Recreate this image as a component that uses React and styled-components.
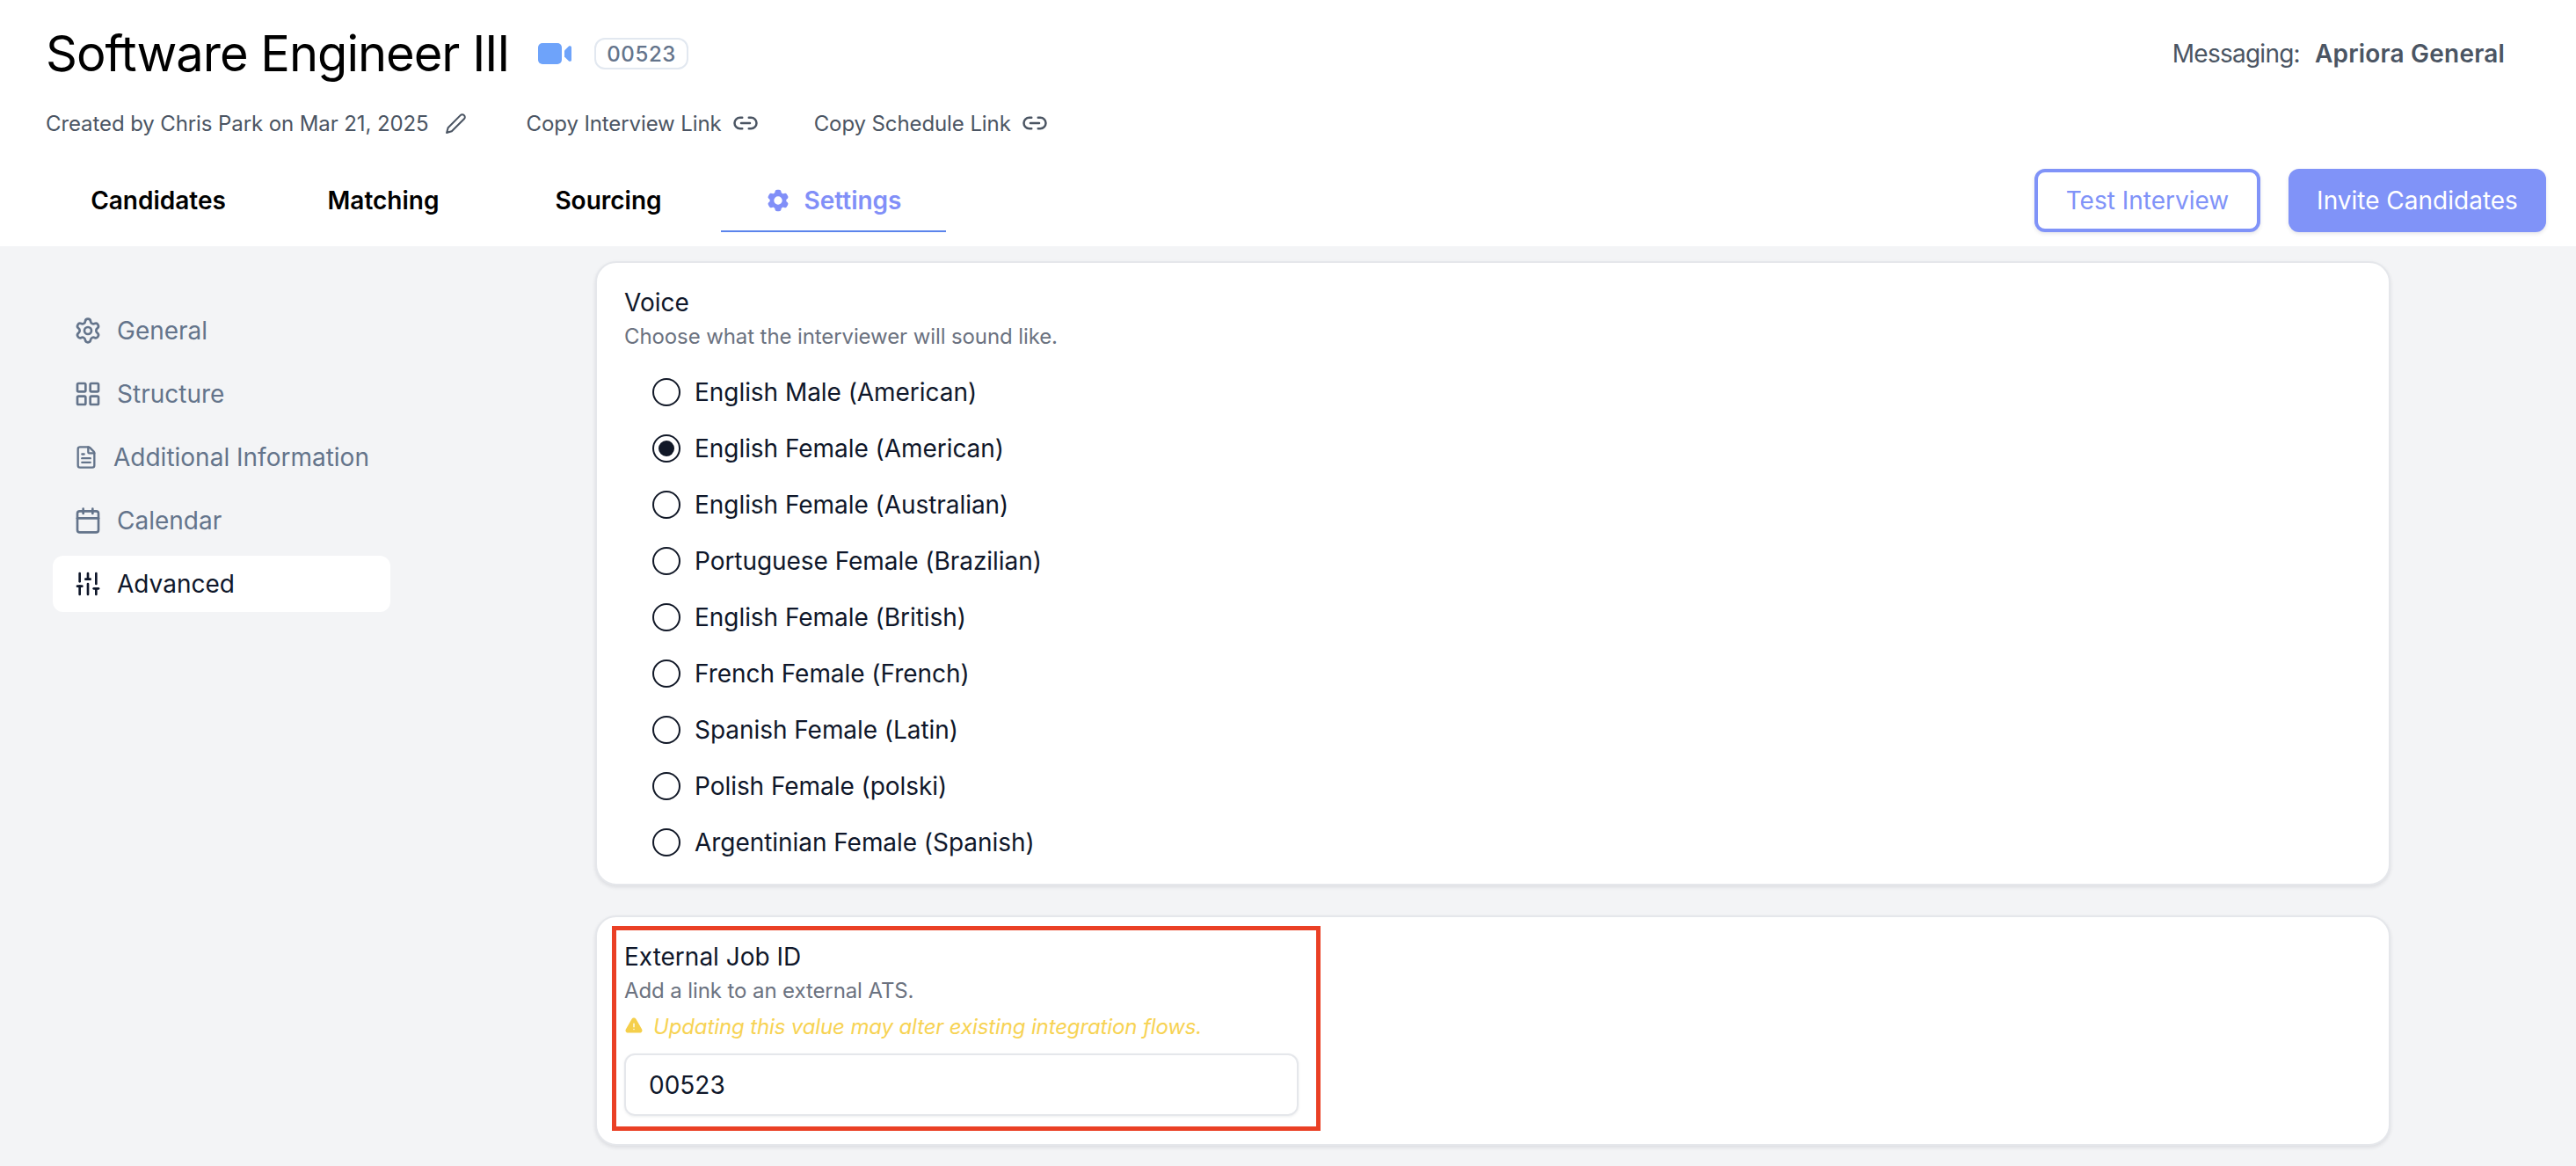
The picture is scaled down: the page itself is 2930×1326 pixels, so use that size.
import React from 'react';
import styled, { createGlobalStyle } from 'styled-components';
import { Link2, Settings, LayoutGrid, FileText, Calendar, SlidersVertical } from 'lucide-react';
import { FiEdit2 } from 'react-icons/fi';
import { HiCog6Tooth, HiExclamationTriangle } from 'react-icons/hi2';

const GlobalStyle = createGlobalStyle`
    html, body {
        margin: 0;
        padding: 0;
        height: 100%;
        background: #f3f4f6;
        font-family: Inter, "Liberation Sans", sans-serif;
        color: #0f172a;
    }
    * { box-sizing: border-box; }
`;

const Page = styled.div`
    width: 2930px;
    height: 1326px;
    overflow: hidden;
    display: flex;
    flex-direction: column;
`;

const Header = styled.header`
    height: 280px;
    background: #ffffff;
    padding: 0 34px 16px 52px;
    display: flex;
    flex-direction: column;
`;

const TopRow = styled.div`
    height: 122px;
    padding-right: 47px;
    display: flex;
    align-items: center;
    justify-content: space-between;
`;

const TitleGroup = styled.div`
    display: flex;
    align-items: center;
`;

const Title = styled.h1`
    margin: 0;
    font-size: 56px;
    font-weight: 400;
    line-height: 72px;
    color: #000000;
    letter-spacing: -1px;
`;

const VideoSvg = styled.svg`
    width: 38px;
    height: 24px;
    margin-left: 33px;
    fill: #6ea3fa;
`;

const VideoIcon = () => (
    <VideoSvg viewBox="0 0 38 24">
        <rect x="0" y="0" width="27" height="24" rx="5"/>
        <path d="M30 8.5 35 3.6c1.1-1 3-.3 3 1.2v14.4c0 1.5-1.9 2.2-3 1.2l-5-4.9z"/>
    </VideoSvg>
);

const Badge = styled.span`
    margin-left: 26px;
    height: 36px;
    padding: 0 12px;
    display: flex;
    align-items: center;
    border: 2px solid #e2e8f0;
    border-radius: 12px;
    font-size: 24px;
    font-weight: 500;
    letter-spacing: 0.6px;
    color: #64748b;
`;

const Messaging = styled.div`
    font-size: 28px;
    color: #4b5563;
    display: flex;
    gap: 17px;
    letter-spacing: -0.75px;
`;

const MessagingName = styled.span`
    font-weight: 600;
    letter-spacing: 0.2px;
`;

const MetaRow = styled.div`
    height: 36px;
    display: flex;
    align-items: center;
    font-size: 24px;
    letter-spacing: -0.1px;
    color: #4b5563;
`;

const MetaItem = styled.span`
    display: flex;
    align-items: center;
    gap: ${(p) => p.$gap || 12}px;
    margin-right: ${(p) => p.$after || 0}px;
`;

const TabRow = styled.div`
    margin-top: auto;
    display: flex;
    align-items: flex-end;
    justify-content: space-between;
`;

const Tabs = styled.nav`
    display: flex;
`;

const Tab = styled.div`
    width: 256px;
    height: 72px;
    padding-top: 2px;
    display: flex;
    align-items: center;
    justify-content: center;
    gap: 14px;
    font-size: 28px;
    font-weight: 600;
    color: ${(p) => (p.$active ? '#818ff8' : '#000000')};
    border-bottom: 2px solid ${(p) => (p.$active ? '#5b84ec' : 'transparent')};
`;

const Actions = styled.div`
    display: flex;
    gap: 32px;
`;

const Button = styled.button`
    height: 72px;
    width: ${(p) => p.$width}px;
    border-radius: 12px;
    border: 4px solid #8093f8;
    background: ${(p) => (p.$solid ? '#8093f8' : '#ffffff')};
    color: ${(p) => (p.$solid ? '#ffffff' : '#8093f8')};
    font-family: inherit;
    font-size: 28px;
    font-weight: 400;
    padding: 0;
    box-shadow: 0 2px 4px rgba(15, 23, 42, 0.1);
`;

const Body = styled.div`
    flex: 1;
    display: flex;
    min-height: 0;
`;

const Sidebar = styled.aside`
    width: 677px;
    padding: 64px 0 0 60px;
    display: flex;
    flex-direction: column;
    gap: 8px;
`;

const SideItem = styled.div`
    width: 384px;
    height: 64px;
    padding-left: 24px;
    display: flex;
    align-items: center;
    gap: 17px;
    border-radius: 12px;
    font-size: 28px;
    background: ${(p) => (p.$active ? '#ffffff' : 'transparent')};
    color: ${(p) => (p.$active ? '#0f172a' : '#64748b')};

    svg {
        flex: none;
    }
`;

const Main = styled.main`
    width: 2042px;
    padding-top: 17px;
    display: flex;
    flex-direction: column;
    gap: 34px;
`;

const Card = styled.section`
    position: relative;
    background: #ffffff;
    border: 2px solid #e5e7eb;
    border-radius: 24px;
    padding: 24px 31px ${(p) => p.$bottom}px;
    box-shadow: 0 2px 4px rgba(15, 23, 42, 0.1);
`;

const CardTitle = styled.div`
    font-size: 28px;
    line-height: 42px;
    color: #0f172a;
`;

const CardHint = styled.div`
    font-size: 24px;
    line-height: 36px;
    letter-spacing: -0.1px;
    color: #6b7280;
`;

const RadioList = styled.div`
    margin-top: 13px;
    display: flex;
    flex-direction: column;
`;

const RadioRow = styled.label`
    height: 64px;
    padding-left: 32px;
    display: flex;
    align-items: center;
    gap: 16px;
    font-size: 28px;
    letter-spacing: -0.05px;
    color: #0f172a;
`;

const RadioDot = styled.span`
    width: 32px;
    height: 32px;
    border-radius: 50%;
    border: 2px solid #111827;
    display: flex;
    align-items: center;
    justify-content: center;

    &::after {
        content: '';
        width: 18px;
        height: 18px;
        border-radius: 50%;
        background: ${(p) => (p.$checked ? '#111827' : 'transparent')};
    }
`;

const Warning = styled.div`
    margin-top: 4px;
    height: 36px;
    display: flex;
    align-items: center;
    gap: 11px;
    font-size: 24px;
    font-style: italic;
    letter-spacing: -0.13px;
    color: #f7d354;

    svg {
        width: 22px;
        height: 22px;
        color: #f5cf4b;
    }
`;

const TextInput = styled.div`
    margin-top: 13px;
    width: 767px;
    height: 71px;
    padding: 0 26px;
    display: flex;
    align-items: center;
    border: 2px solid #e5e7eb;
    border-radius: 12px;
    font-size: 28px;
    color: #0f172a;
    box-shadow: 0 1px 3px rgba(15, 23, 42, 0.08);
`;

// red annotation drawn over the card in the screenshot
const Highlight = styled.div`
    position: absolute;
    left: 17px;
    top: 10px;
    width: 806px;
    height: 233px;
    border: 5px solid #ea4025;
    pointer-events: none;
`;

const voices = [
    'English Male (American)',
    'English Female (American)',
    'English Female (Australian)',
    'Portuguese Female (Brazilian)',
    'English Female (British)',
    'French Female (French)',
    'Spanish Female (Latin)',
    'Polish Female (polski)',
    'Argentinian Female (Spanish)',
];

const sideItems = [
    { label: 'General', Icon: Settings, size: 32 },
    { label: 'Structure', Icon: LayoutGrid, size: 32 },
    { label: 'Additional Information', Icon: FileText, size: 28 },
    { label: 'Calendar', Icon: Calendar, size: 32 },
    { label: 'Advanced', Icon: SlidersVertical, size: 32, active: true },
];

export default function App() {
    return <>
        <GlobalStyle/>
        <Page>
            <Header>
                <TopRow>
                    <TitleGroup>
                        <Title>Software Engineer III</Title>
                        <VideoIcon/>
                        <Badge>00523</Badge>
                    </TitleGroup>
                    <Messaging>
                        <span>Messaging:</span>
                        <MessagingName>Apriora General</MessagingName>
                    </Messaging>
                </TopRow>
                <MetaRow>
                    <MetaItem $gap={18} $after={68}>
                        Created by Chris Park on Mar 21, 2025
                        <FiEdit2 size={25}/>
                    </MetaItem>
                    <MetaItem $gap={12} $after={63}>
                        Copy Interview Link
                        <Link2 size={30} strokeWidth={2}/>
                    </MetaItem>
                    <MetaItem $gap={12}>
                        Copy Schedule Link
                        <Link2 size={30} strokeWidth={2}/>
                    </MetaItem>
                </MetaRow>
                <TabRow>
                    <Tabs>
                        <Tab>Candidates</Tab>
                        <Tab>Matching</Tab>
                        <Tab>Sourcing</Tab>
                        <Tab $active>
                            <HiCog6Tooth size={30}/>
                            Settings
                        </Tab>
                    </Tabs>
                    <Actions>
                        <Button $width={257}>Test Interview</Button>
                        <Button $width={293} $solid>Invite Candidates</Button>
                    </Actions>
                </TabRow>
            </Header>
            <Body>
                <Sidebar>
                    {sideItems.map(({ label, Icon, size, active }) => (
                        <SideItem key={label} $active={active}>
                            <Icon size={size} strokeWidth={2}/>
                            {label}
                        </SideItem>
                    ))}
                </Sidebar>
                <Main>
                    <Card $bottom={15}>
                        <CardTitle>Voice</CardTitle>
                        <CardHint>Choose what the interviewer will sound like.</CardHint>
                        <RadioList>
                            {voices.map((voice, i) => (
                                <RadioRow key={voice}>
                                    <RadioDot $checked={i === 1}/>
                                    {voice}
                                </RadioRow>
                            ))}
                        </RadioList>
                    </Card>
                    <Card $bottom={32}>
                        <CardTitle>External Job ID</CardTitle>
                        <CardHint>Add a link to an external ATS.</CardHint>
                        <Warning>
                            <HiExclamationTriangle/>
                            Updating this value may alter existing integration flows.
                        </Warning>
                        <TextInput>00523</TextInput>
                        <Highlight/>
                    </Card>
                </Main>
            </Body>
        </Page>
    </>;
}
